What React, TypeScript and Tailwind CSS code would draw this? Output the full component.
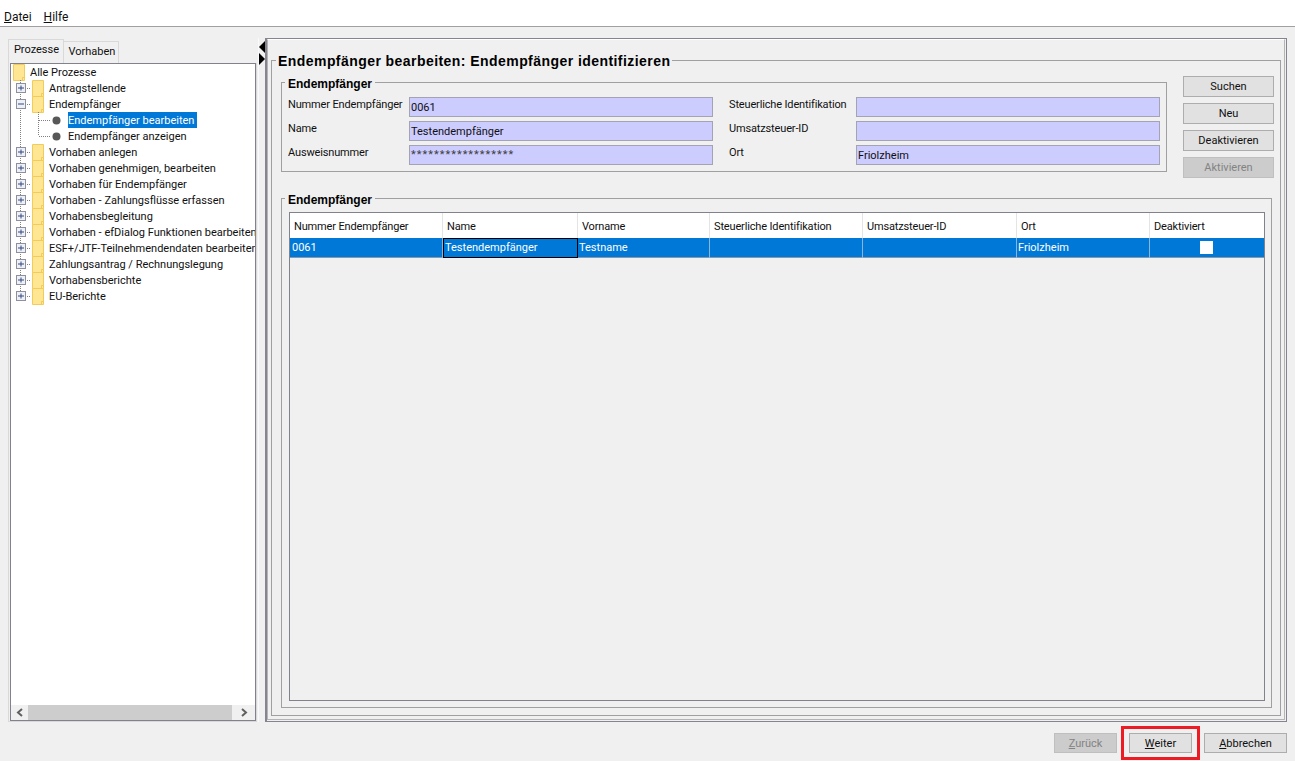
const treeItems = [
  { label: "Antragstellende" },
  {
    label: "Endempfänger",
    open: true,
    children: ["Endempfänger bearbeiten", "Endempfänger anzeigen"],
  },
  { label: "Vorhaben anlegen" },
  { label: "Vorhaben genehmigen, bearbeiten" },
  { label: "Vorhaben für Endempfänger" },
  { label: "Vorhaben - Zahlungsflüsse erfassen" },
  { label: "Vorhabensbegleitung" },
  { label: "Vorhaben - efDialog Funktionen bearbeiten" },
  { label: "ESF+/JTF-Teilnehmendendaten bearbeiten" },
  { label: "Zahlungsantrag / Rechnungslegung" },
  { label: "Vorhabensberichte" },
  { label: "EU-Berichte" },
];

const columns = [
  "Nummer Endempfänger",
  "Name",
  "Vorname",
  "Steuerliche Identifikation",
  "Umsatzsteuer-ID",
  "Ort",
  "Deaktiviert",
];

function Folder({ x }: { x: number }) {
  return (
    <g transform={`translate(${x} 0)`}>
      <path d="M0.5 0.5H11.5V16.5H0.5Z" fill="#ffe693" stroke="#f2cb5c" />
      <path d="M9.5 16.5V13.5H11.5" fill="none" stroke="#f2cb5c" />
    </g>
  );
}

function Expander({ open }: { open?: boolean }) {
  return (
    <g>
      <rect x="5.5" y="3.5" width="9" height="9" fill="#eef0f6" stroke="#8e8f9f" />
      <path d="M7 8H13" stroke="#2f4a80" />
      {!open && <path d="M10 5.5V10.5" stroke="#2f4a80" />}
    </g>
  );
}

function TopRow({
  label,
  open,
  last,
}: {
  label: string;
  open?: boolean;
  last: boolean;
}) {
  return (
    <div className="flex h-4 items-center">
      <svg width="38" height="17" className="-mb-px shrink-0 self-start overflow-visible">
        <path
          d={last ? "M9.5 0V8" : "M9.5 0V16"}
          stroke="#808080"
          strokeDasharray="1 1"
          fill="none"
        />
        <path d="M14 8.5H20" stroke="#808080" strokeDasharray="1 1" fill="none" />
        <Expander open={open} />
        <Folder x={21} />
      </svg>
      <span className="pt-[2px]">{label}</span>
    </div>
  );
}

function ChildRow({
  label,
  last,
  selected,
}: {
  label: string;
  last: boolean;
  selected?: boolean;
}) {
  return (
    <div className="flex h-4 items-center">
      <svg width="57" height="16" className="shrink-0">
        <path d="M9.5 0V16" stroke="#808080" strokeDasharray="1 1" fill="none" />
        <path
          d={last ? "M27.5 0V8" : "M27.5 0V16"}
          stroke="#808080"
          strokeDasharray="1 1"
          fill="none"
        />
        <path d="M28 8.5H39" stroke="#808080" strokeDasharray="1 1" fill="none" />
        <circle cx="45.5" cy="8.5" r="4" fill="#585858" />
      </svg>
      <span
        className={
          selected
            ? "flex h-4 w-[129px] items-center bg-[#0078d7] pt-[2px] text-white"
            : "pt-[2px]"
        }
      >
        {label}
      </span>
    </div>
  );
}

function Tree() {
  return (
    <div className="flex-1 overflow-hidden whitespace-nowrap text-[#101010]">
      <div className="flex h-4 items-center">
        <svg width="19" height="17" className="-mb-px shrink-0 self-start overflow-visible">
          <Folder x={2} />
        </svg>
        <span className="pt-[2px]">Alle Prozesse</span>
      </div>
      {treeItems.map((item, i) => (
        <div key={item.label}>
          <TopRow
            label={item.label}
            open={item.open}
            last={i === treeItems.length - 1}
          />
          {item.children?.map((child, n) => (
            <ChildRow
              key={child}
              label={child}
              selected={n === 0}
              last={n === item.children.length - 1}
            />
          ))}
        </div>
      ))}
    </div>
  );
}

function ScrollBar() {
  return (
    <div className="flex h-[15px] shrink-0 items-center bg-[#f0f0f0]">
      <div className="flex w-[17px] justify-center">
        <svg width="8" height="9">
          <path d="M6 1L2 4.5L6 8" fill="none" stroke="#606060" strokeWidth="2" />
        </svg>
      </div>
      <div className="h-full w-[204px] bg-[#cdcdcd]" />
      <div className="flex flex-1 justify-center">
        <svg width="8" height="9">
          <path d="M2 1L6 4.5L2 8" fill="none" stroke="#606060" strokeWidth="2" />
        </svg>
      </div>
    </div>
  );
}

function Field({ value, stars }: { value?: string; stars?: boolean }) {
  return (
    <div
      className={`flex h-[20px] border border-[#a3a3b3] bg-[#ccccff] pl-[1px] ${
        stars
          ? "items-start pt-[3px] leading-[12px] tracking-[1px] text-[#404040]"
          : "items-center pt-[3px] text-[#101010]"
      }`}
    >
      {value}
    </div>
  );
}

function Label({ text, inset }: { text: string; inset?: boolean }) {
  return (
    <div
      className={`h-[14px] whitespace-nowrap pt-px leading-[14px] tracking-[-0.15px] ${
        inset ? "pl-4" : ""
      }`}
    >
      {text}
    </div>
  );
}

function SideButton({ text, disabled }: { text: string; disabled?: boolean }) {
  return (
    <button
      className={
        disabled
          ? "h-[21px] w-[91px] border border-[#bfbfbf] bg-[#cccccc] pt-px text-[#838383]"
          : "h-[21px] w-[91px] border border-[#adadad] bg-[#e1e1e1] pt-px"
      }
    >
      {text}
    </button>
  );
}

function ResultTable() {
  return (
    <div className="flex flex-1 flex-col border border-[#82828c]">
      <div className="grid h-[25px] grid-cols-[153px_135px_132px_153px_154px_133px_1fr] bg-white">
        {columns.map((c) => (
          <div
            key={c}
            className="flex items-center border-r border-[#e4e4e4] pl-1 pt-[3px] tracking-[-0.15px] last:border-r-0"
          >
            {c}
          </div>
        ))}
      </div>
      <div className="grid h-[20px] grid-cols-[153px_135px_132px_153px_154px_133px_1fr] border-b border-[#8b97a5] bg-[#0078d7] text-white">
        <div className="flex items-center border-r border-[#8bb4dc] pl-[2px] pt-px">0061</div>
        <div className="flex items-center border border-black pl-px pt-px">
          Testendempfänger
        </div>
        <div className="flex items-center border-r border-[#8bb4dc] pl-px pt-px">Testname</div>
        <div className="border-r border-[#8bb4dc]" />
        <div className="border-r border-[#8bb4dc]" />
        <div className="flex items-center border-r border-[#8bb4dc] pl-px pt-px">Friolzheim</div>
        <div className="flex items-center justify-center pr-[2px]">
          <div className="h-[13px] w-[13px] bg-white" />
        </div>
      </div>
      <div className="flex-1 bg-[#f0f0f0]" />
    </div>
  );
}

export default function App() {
  return (
    <div className="flex h-[761px] w-[1295px] flex-col overflow-hidden bg-[#f0f0f0] font-['Roboto',sans-serif] text-[11px] text-[#101010]">
      <div className="flex h-[27px] shrink-0 items-center gap-3 border-b border-[#a0a0a0] bg-white pl-1 pt-2 text-[12px]">
        <span>
          <u>D</u>atei
        </span>
        <span>
          <u>H</u>ilfe
        </span>
      </div>

      <div className="flex h-[695px] shrink-0 pt-[11px]">
        <div className="ml-2 mt-px flex w-[249px] flex-col">
          <div className="flex h-[24px] shrink-0 items-end">
            <div className="flex h-[24px] w-[56px] items-center justify-center border border-b-0 border-[#d9d9d9] pb-[2px] pl-px">
              Prozesse
            </div>
            <div className="flex h-[22px] w-[55px] items-center justify-center border border-b-0 border-l-0 border-[#d9d9d9] pb-px pl-[2px]">
              Vorhaben
            </div>
          </div>
          <div className="flex flex-1 flex-col border border-t-0 border-[#d9d9d9] pl-px">
            <div className="flex flex-1 flex-col overflow-hidden border border-[#82828c] bg-white">
              <Tree />
              <ScrollBar />
            </div>
          </div>
        </div>

        <div className="ml-px flex w-[7px] flex-col border-l border-[#fafafa] pt-[2px]">
          <svg width="6" height="26">
            <path d="M6 1V13L0 7Z" fill="#000" />
            <path d="M0 13V25L6 19Z" fill="#000" />
          </svg>
        </div>

        <div className="flex w-[1022px] flex-col border border-l-2 border-[#85858f] pb-px pr-px">
          <div className="flex min-h-0 flex-1 flex-col border border-[#b4b4b4] border-t-white pb-[3px] pl-[3px] pr-[4px] pt-[12px]">
            <fieldset className="flex min-h-0 flex-1 flex-col border border-[#a0a0a0] pb-[7px] pl-[9px] pr-[6px]">
              <legend className="-ml-[5px] h-[16px] px-[2px] font-['Liberation_Sans',sans-serif] text-[14px] font-bold leading-[18px] tracking-[0.44px] text-black">
                Endempfänger bearbeiten: Endempfänger identifizieren
              </legend>
              <div className="mt-[6px] flex items-start gap-4">
                <fieldset className="w-[886px] border border-[#a0a0a0] px-[6px] pb-[6px] pt-[7px]">
                  <legend className="-ml-[3px] h-[16px] px-[3px] font-['Liberation_Sans',sans-serif] text-[12px] font-bold leading-[20px] text-black">
                    Endempfänger
                  </legend>
                  <div className="grid grid-cols-[121px_304px_143px_304px] gap-y-1">
                    <Label text="Nummer Endempfänger" />
                    <Field value="0061" />
                    <Label text="Steuerliche Identifikation" inset />
                    <Field />
                    <Label text="Name" />
                    <Field value="Testendempfänger" />
                    <Label text="Umsatzsteuer-ID" inset />
                    <Field />
                    <Label text="Ausweisnummer" />
                    <Field value="******************" stars />
                    <Label text="Ort" inset />
                    <Field value="Friolzheim" />
                  </div>
                </fieldset>
                <div className="mt-[2px] flex flex-col gap-[6px]">
                  <SideButton text="Suchen" />
                  <SideButton text="Neu" />
                  <SideButton text="Deaktivieren" />
                  <SideButton text="Aktivieren" disabled />
                </div>
              </div>
              <fieldset className="mr-[2px] mt-[12px] flex min-h-0 flex-1 flex-col border border-[#a0a0a0] pb-[6px] pl-[7px] pr-[6px] pt-[6px]">
                <legend className="-ml-[4px] h-[16px] px-[3px] font-['Liberation_Sans',sans-serif] text-[12px] font-bold leading-[20px] text-black">
                  Endempfänger
                </legend>
                <ResultTable />
              </fieldset>
            </fieldset>
          </div>
        </div>
      </div>

      <div className="flex h-[39px] shrink-0 items-start justify-end gap-1 pr-2 pt-1">
        <button className="mt-[7px] h-[20px] w-[63px] border border-[#bfbfbf] bg-[#cccccc] pt-[2px] text-[#838383]">
          <u>Z</u>urück
        </button>
        <div className="border-[3px] border-[#ed1c24] px-[5px] py-1">
          <button className="block h-[20px] w-[63px] border border-[#adadad] bg-[#e1e1e1] pt-[2px]">
            <u>W</u>eiter
          </button>
        </div>
        <button className="mt-[7px] h-[20px] w-[83px] border border-[#adadad] bg-[#e1e1e1] pt-[2px]">
          <u>A</u>bbrechen
        </button>
      </div>
    </div>
  );
}
